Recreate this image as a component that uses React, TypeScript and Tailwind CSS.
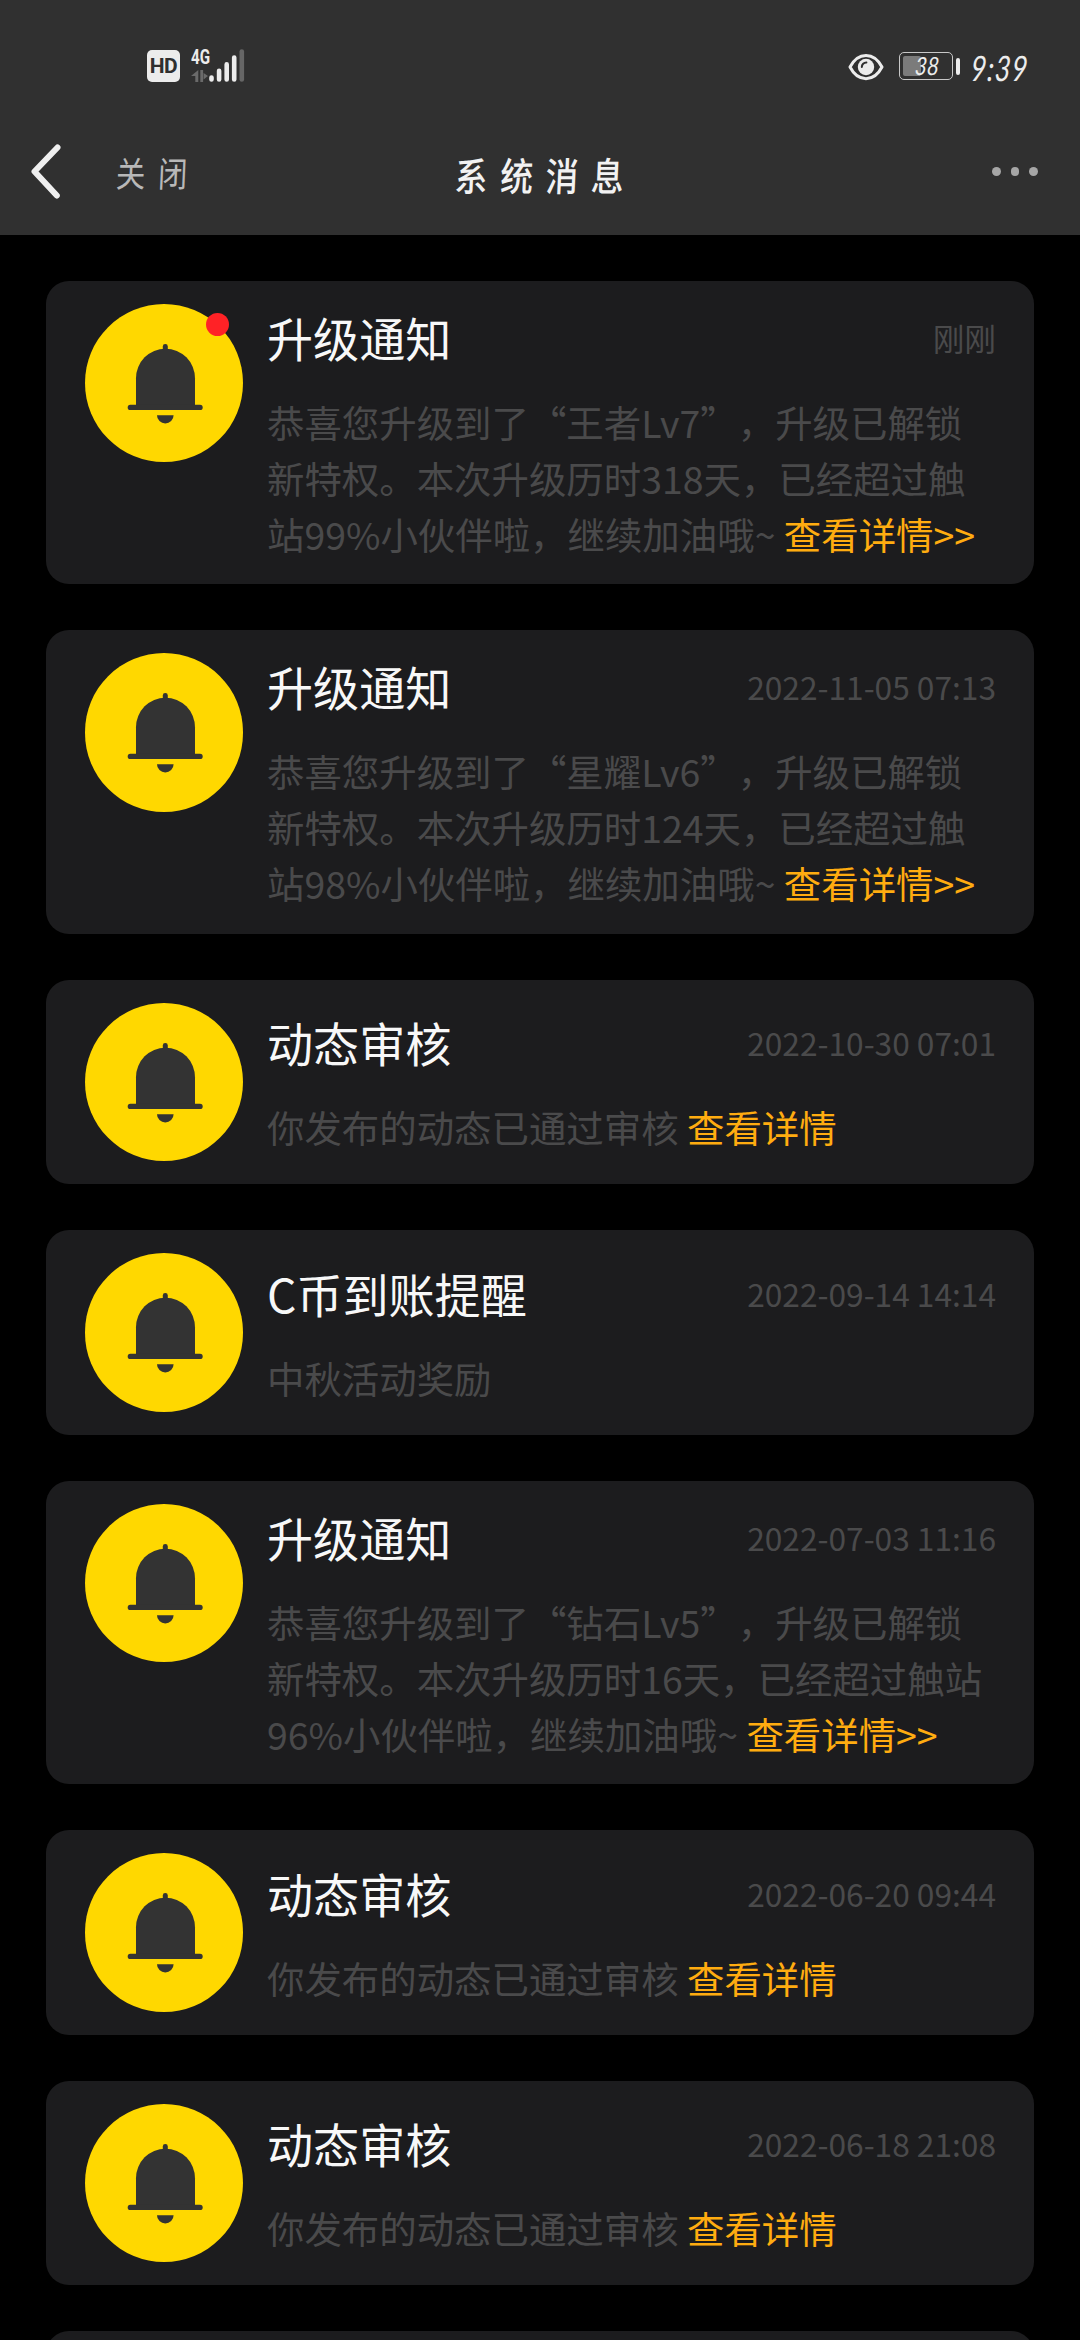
import React from "react";

type Notice = {
  title: string;
  time: string;
  lines: string[];
  link?: string;
  unread?: boolean;
};

const notices: Notice[] = [
  {
    title: "升级通知",
    time: "刚刚",
    lines: ["恭喜您升级到了“王者Lv7”，升级已解锁", "新特权。本次升级历时318天，已经超过触", "站99%小伙伴啦，继续加油哦~ "],
    link: "查看详情>>",
    unread: true,
  },
  {
    title: "升级通知",
    time: "2022-11-05 07:13",
    lines: ["恭喜您升级到了“星耀Lv6”，升级已解锁", "新特权。本次升级历时124天，已经超过触", "站98%小伙伴啦，继续加油哦~ "],
    link: "查看详情>>",
  },
  { title: "动态审核", time: "2022-10-30 07:01", lines: ["你发布的动态已通过审核 "], link: "查看详情" },
  { title: "C币到账提醒", time: "2022-09-14 14:14", lines: ["中秋活动奖励"] },
  {
    title: "升级通知",
    time: "2022-07-03 11:16",
    lines: ["恭喜您升级到了“钻石Lv5”，升级已解锁", "新特权。本次升级历时16天，已经超过触站", "96%小伙伴啦，继续加油哦~ "],
    link: "查看详情>>",
  },
  { title: "动态审核", time: "2022-06-20 09:44", lines: ["你发布的动态已通过审核 "], link: "查看详情" },
  { title: "动态审核", time: "2022-06-18 21:08", lines: ["你发布的动态已通过审核 "], link: "查看详情" },
];

function BellAvatar({ unread }: { unread?: boolean }) {
  return (
    <div className="relative size-[158.4px] shrink-0 rounded-full bg-[#ffd800]">
      <svg viewBox="0 0 158.4 158.4" className="size-full" fill="#333333">
        <rect x="77.8" y="40" width="5" height="10" rx="2.4" />
        <path d="M51 102V74.2a29.5 29.5 0 0 1 59 0V102z" />
        <rect x="42.7" y="100.7" width="75" height="5.3" rx="2.6" />
        <path d="M72 111.2h16.6a8.3 8.3 0 0 1-16.6 0z" />
      </svg>
      {unread && <span className="absolute left-[121px] top-[8.8px] size-[23.2px] rounded-full bg-[#ff2226]" />}
    </div>
  );
}

function NoticeCard({ notice }: { notice: Notice }) {
  const last = notice.lines.length - 1;
  return (
    <article className="flex rounded-[23px] bg-[#1c1c1e] px-[39px] py-[23.04px]">
      <BellAvatar unread={notice.unread} />
      <div className="ml-[23.6px] -mr-px flex min-w-0 flex-1 flex-col justify-center">
        <div className="flex h-[66px] items-center justify-between">
          <h2 className="text-[46.08px] leading-[66px] text-[#f8f8f8]">{notice.title}</h2>
          <time className="text-[31.68px] leading-[66px] text-[#4a4a4b]">{notice.time}</time>
        </div>
        <p className="-mb-px mt-[23.8px] text-[37.44px] leading-[56.16px] text-[#4a4a4b] [text-spacing-trim:space-all]">
          {notice.lines.map((line, i) => (
            <span key={i} className="block whitespace-pre">
              {line}
              {i === last && notice.link && <a className="text-[#ffac10]">{notice.link}</a>}
            </span>
          ))}
        </p>
      </div>
    </article>
  );
}

function StatusBar() {
  return (
    <div className="flex h-[110px] items-start justify-between pl-[147px] pr-[52px] pt-[49px] text-[#ececec]">
      <div className="flex">
        <div className="mt-px flex h-8 w-[33px] items-center justify-center rounded-[5px] bg-[#ececec] font-['Roboto'] text-[21px] font-bold leading-none tracking-[-0.5px] text-[#2f2f2f]">
          HD
        </div>
        <div className="ml-[11px] flex h-[34px] w-[19px] flex-col">
          <span className="w-6 origin-left scale-x-[0.76] font-['Roboto'] text-[20px] font-bold leading-4">4G</span>
          <svg viewBox="0 0 17 12" className="mt-[5px] h-3 w-[17px]" fill="#6a6a6a">
            <path d="M7.3 0v12H4.3V6H0zM9.3 0h2.8v12H9.3zM12.6 3v6.5L17 6z" />
          </svg>
        </div>
        <svg viewBox="0 0 36 34" className="ml-[-1px] h-[34px] w-9" strokeWidth="4.6" strokeLinecap="round" stroke="#ececec">
          <path d="M2.5 28.5V30.5M10.1 21.8V30.5M17.7 15.4V30.5M25.2 8.6V30.5" />
          <path d="M32.8 2.5V30.5" stroke="#666666" />
        </svg>
      </div>
      <div className="flex">
        <svg viewBox="0 0 36 28" className="mt-[3.5px] h-7 w-9">
          <path d="M2 14C10-1.5 26-1.5 34 14C26 29.5 10 29.5 2 14z" fill="none" stroke="#ececec" strokeWidth="3" strokeLinejoin="round" />
          <circle cx="18" cy="14" r="8.2" fill="#ececec" />
          <path d="M13.8 14a4.5 4.5 0 0 1 4.6-4.5" fill="none" stroke="#303030" strokeWidth="2" strokeLinecap="round" />
        </svg>
        <div className="relative ml-[15px] mt-[3px] flex h-7 w-[54px] rounded-[5px] border-[1.5px] border-[#c8c8c8] p-[3px]">
          <div className="h-full w-[18px] rounded-[2px] bg-[#7b7b7b]" />
          <span className="absolute left-[15px] top-0 origin-left -skew-x-6 scale-x-[0.84] font-['Lato'] text-[25px] italic leading-[25px]">38</span>
        </div>
        <div className="ml-[3px] mt-[9px] h-[17px] w-[4.5px] rounded-full bg-[#ececec]" />
        <div className="ml-[11px] mt-[3px] w-[57px] whitespace-nowrap">
          <div className="w-[66px] origin-left -skew-x-6 scale-x-[0.78] font-['Lato'] text-[35px] italic leading-[30px] tracking-[1px]">9:39</div>
        </div>
      </div>
    </div>
  );
}

function NavBar() {
  return (
    <div className="grid h-[125px] grid-cols-3 items-start">
      <div className="flex">
        <svg viewBox="0 0 34 60" className="ml-[29px] mt-[32px] h-[60px] w-[34px]" fill="none" stroke="#efefef" strokeWidth="6" strokeLinecap="round" strokeLinejoin="round">
          <path d="M28.5 5.5L5.5 29.5L27.8 53.5" />
        </svg>
        <span className="ml-[53px] mt-[35px] origin-left -skew-x-3 scale-x-[0.84] whitespace-nowrap text-[35px] leading-[54px] tracking-[15px] text-[#b8b8b8]">关闭</span>
      </div>
      <h1 className="mt-[37px] flex justify-center">
        <span className="-skew-x-3 scale-x-[0.84] whitespace-nowrap pl-[15px] text-[39px] font-medium leading-[54px] tracking-[15px] text-[#f2f2f2]">系统消息</span>
      </h1>
      <div className="mr-[42px] mt-[57px] flex justify-end gap-[10px]">
        <span className="size-[8.7px] rounded-full bg-[#a6a6a6]" />
        <span className="size-[8.7px] rounded-full bg-[#a6a6a6]" />
        <span className="size-[8.7px] rounded-full bg-[#a6a6a6]" />
      </div>
    </div>
  );
}

export default function App() {
  return (
    <div lang="zh-CN" className="h-[2340px] w-[1080px] overflow-hidden bg-black font-['Noto_Sans_CJK_SC',sans-serif]">
      <header className="h-[235px] bg-[#303030]">
        <StatusBar />
        <NavBar />
      </header>
      <main className="flex flex-col gap-[46.08px] px-[46px] pt-[45.9px]">
        {notices.map((n, i) => (
          <NoticeCard key={i} notice={n} />
        ))}
        <div className="h-[204px] rounded-[23px] bg-[#1c1c1e]" />
      </main>
    </div>
  );
}
